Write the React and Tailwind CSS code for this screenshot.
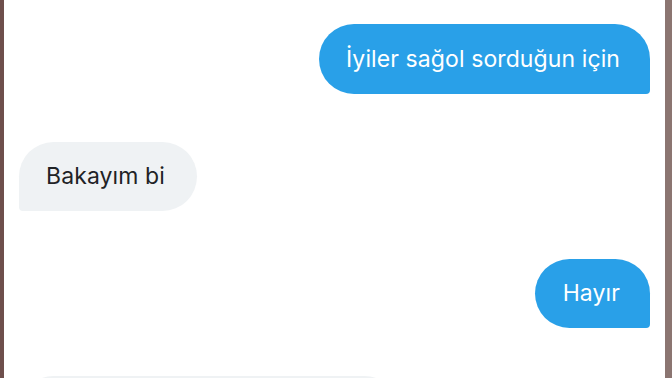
export default function App() {
  return (
    <div className="flex h-[378px] w-[672px] overflow-hidden bg-white" style={{ fontFamily: 'Inter, "Noto Sans", sans-serif' }}>
      <div className="w-[4px] shrink-0 bg-[#6e4f4c]" />
      <div className="flex flex-1 flex-col gap-[48px] bg-white pt-[24px] pl-[15px] pr-[15px]">
        <div className="flex justify-end">
          <div className="flex h-[70px] items-center rounded-[35px] rounded-br-[4px] bg-[#29a0e8] pl-[27px] pr-[30px] text-[23px] tracking-[0.1px] text-white">
            İyiler sağol sorduğun için
          </div>
        </div>
        <div className="flex justify-start">
          <div className="flex h-[69px] items-center rounded-[35px] rounded-bl-[4px] bg-[#eff2f4] pl-[27px] pr-[32px] text-[23px] tracking-[0.1px] text-[#1f2326]">
            Bakayım bi
          </div>
        </div>
        <div className="flex justify-end">
          <div className="flex h-[69px] items-center rounded-[35px] rounded-br-[4px] bg-[#29a0e8] pl-[28px] pr-[30px] text-[23px] tracking-[0.1px] text-white">
            Hayır
          </div>
        </div>
        <div className="flex justify-start">
          <div className="h-[69px] w-[380px] shrink-0 rounded-[35px] rounded-bl-[4px] bg-[#eff2f4]" />
        </div>
      </div>
      <div className="w-[7px] shrink-0 bg-[#8b7571]" />
    </div>
  );
}
